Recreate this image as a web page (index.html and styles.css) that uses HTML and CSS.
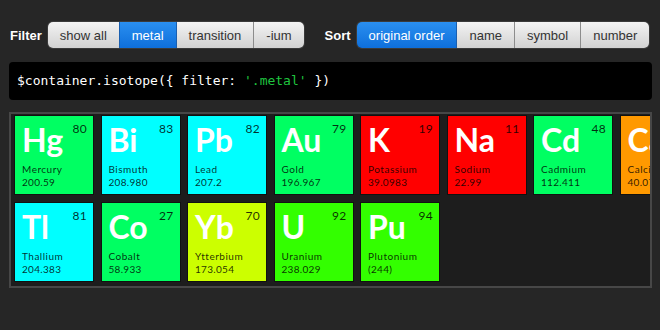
FILE: index.html
```html
<!DOCTYPE html>
<html>
<head>
<meta charset="utf-8">
<link rel="stylesheet" href="styles.css">
</head>
<body>
<div class="page">
  <div class="controls">
    <div class="group">
      <span class="label">Filter</span>
      <div class="buttons">
        <button class="btn">show all</button>
        <button class="btn active">metal</button>
        <button class="btn">transition</button>
        <button class="btn">-ium</button>
      </div>
    </div>
    <div class="group">
      <span class="label">Sort</span>
      <div class="buttons">
        <button class="btn active">original order</button>
        <button class="btn">name</button>
        <button class="btn">symbol</button>
        <button class="btn">number</button>
      </div>
    </div>
  </div>

  <pre class="code">$container.isotope({ filter: <span class="str">'.metal'</span> })</pre>

  <div class="table">
    <div class="grid">
      <div class="el transition"><span class="num">80</span><div class="sym">Hg</div><div class="name">Mercury</div><div class="weight">200.59</div></div>
      <div class="el post"><span class="num">83</span><div class="sym">Bi</div><div class="name">Bismuth</div><div class="weight">208.980</div></div>
      <div class="el post"><span class="num">82</span><div class="sym">Pb</div><div class="name">Lead</div><div class="weight">207.2</div></div>
      <div class="el transition"><span class="num">79</span><div class="sym">Au</div><div class="name">Gold</div><div class="weight">196.967</div></div>
      <div class="el alkali"><span class="num">19</span><div class="sym">K</div><div class="name">Potassium</div><div class="weight">39.0983</div></div>
      <div class="el alkali"><span class="num">11</span><div class="sym">Na</div><div class="name">Sodium</div><div class="weight">22.99</div></div>
      <div class="el transition"><span class="num">48</span><div class="sym">Cd</div><div class="name">Cadmium</div><div class="weight">112.411</div></div>
      <div class="el earth"><span class="num">20</span><div class="sym">Ca</div><div class="name">Calcium</div><div class="weight">40.078</div></div>
      <div class="el post"><span class="num">81</span><div class="sym">Tl</div><div class="name">Thallium</div><div class="weight">204.383</div></div>
      <div class="el transition"><span class="num">27</span><div class="sym">Co</div><div class="name">Cobalt</div><div class="weight">58.933</div></div>
      <div class="el lanth"><span class="num">70</span><div class="sym">Yb</div><div class="name">Ytterbium</div><div class="weight">173.054</div></div>
      <div class="el actin"><span class="num">92</span><div class="sym">U</div><div class="name">Uranium</div><div class="weight">238.029</div></div>
      <div class="el actin"><span class="num">94</span><div class="sym">Pu</div><div class="name">Plutonium</div><div class="weight">(244)</div></div>
    </div>
  </div>
</div>
</body>
</html>
```

FILE: styles.css
```css
html, body {
  margin: 0;
  padding: 0;
  background: #262626;
}

.page {
  padding: 22px 0 0 9px;
  width: 643px;
}

.controls {
  display: flex;
  align-items: center;
  height: 26px;
}

.group {
  display: flex;
  align-items: center;
}

.group + .group {
  margin-left: 20px;
}

.label {
  font-family: "Liberation Sans", Arial, sans-serif;
  font-weight: bold;
  font-size: 13px;
  color: #fff;
  margin-left: 1px;
  margin-right: 6px;
}

.buttons {
  display: flex;
  height: 26px;
  border-radius: 5px;
  overflow: hidden;
  box-shadow: 0 0 0 1px #3a3a3a;
}

.btn {
  font-family: "Liberation Sans", Arial, sans-serif;
  font-size: 13px;
  color: #333;
  border: 0;
  margin: 0;
  padding: 0 12px;
  height: 26px;
  background: linear-gradient(#f3f3f3, #d2d2d2);
  border-left: 1px solid #8c8c8c;
  cursor: pointer;
}

.btn:first-child {
  border-left: 0;
}

.btn.active {
  color: #fff;
  background: linear-gradient(#2a8ff0, #0e6fdb);
  border-left-color: #1a5fb0;
}

.btn.active + .btn {
  border-left-color: #1a5fb0;
}

.code {
  margin: 14px 0 0 0;
  height: 38px;
  box-sizing: border-box;
  padding: 0 8px;
  background: #000;
  border-radius: 4px;
  color: #fff;
  font-family: "DejaVu Sans Mono", "Liberation Mono", monospace;
  font-size: 13px;
  line-height: 38px;
}

.code .str {
  color: #1fc43f;
}

.table {
  margin-top: 12px;
  height: 176px;
  box-sizing: border-box;
  border: 2px solid #474747;
  background: #1d1d1d;
  padding: 1px 0 0 3px;
  overflow: hidden;
}

.grid {
  display: grid;
  grid-template-columns: repeat(8, 80px);
  grid-auto-rows: 80px;
  column-gap: 6.5px;
  row-gap: 7px;
}

.el {
  position: relative;
  box-sizing: border-box;
  border: 1px solid #111;
  padding: 8px 6px 0 7px;
  font-family: Lato, "Open Sans", sans-serif;
  color: rgba(0, 0, 0, 0.82);
}

.transition { background: #00ff62; }
.post { background: #00ffff; }
.alkali { background: #ff0000; }
.earth { background: #ff9900; }
.lanth { background: #ccff00; }
.actin { background: #33ff00; }

.num {
  position: absolute;
  top: 7px;
  right: 6px;
  font-size: 12px;
  line-height: 12px;
  letter-spacing: 0.3px;
}

.sym {
  font-size: 32px;
  line-height: 32px;
  font-weight: 700;
  color: #fff;
}

.name {
  margin-top: 7px;
  font-size: 10px;
  line-height: 13px;
  letter-spacing: 0.5px;
}

.weight {
  font-size: 10px;
  line-height: 13px;
  letter-spacing: 0.3px;
}
```
